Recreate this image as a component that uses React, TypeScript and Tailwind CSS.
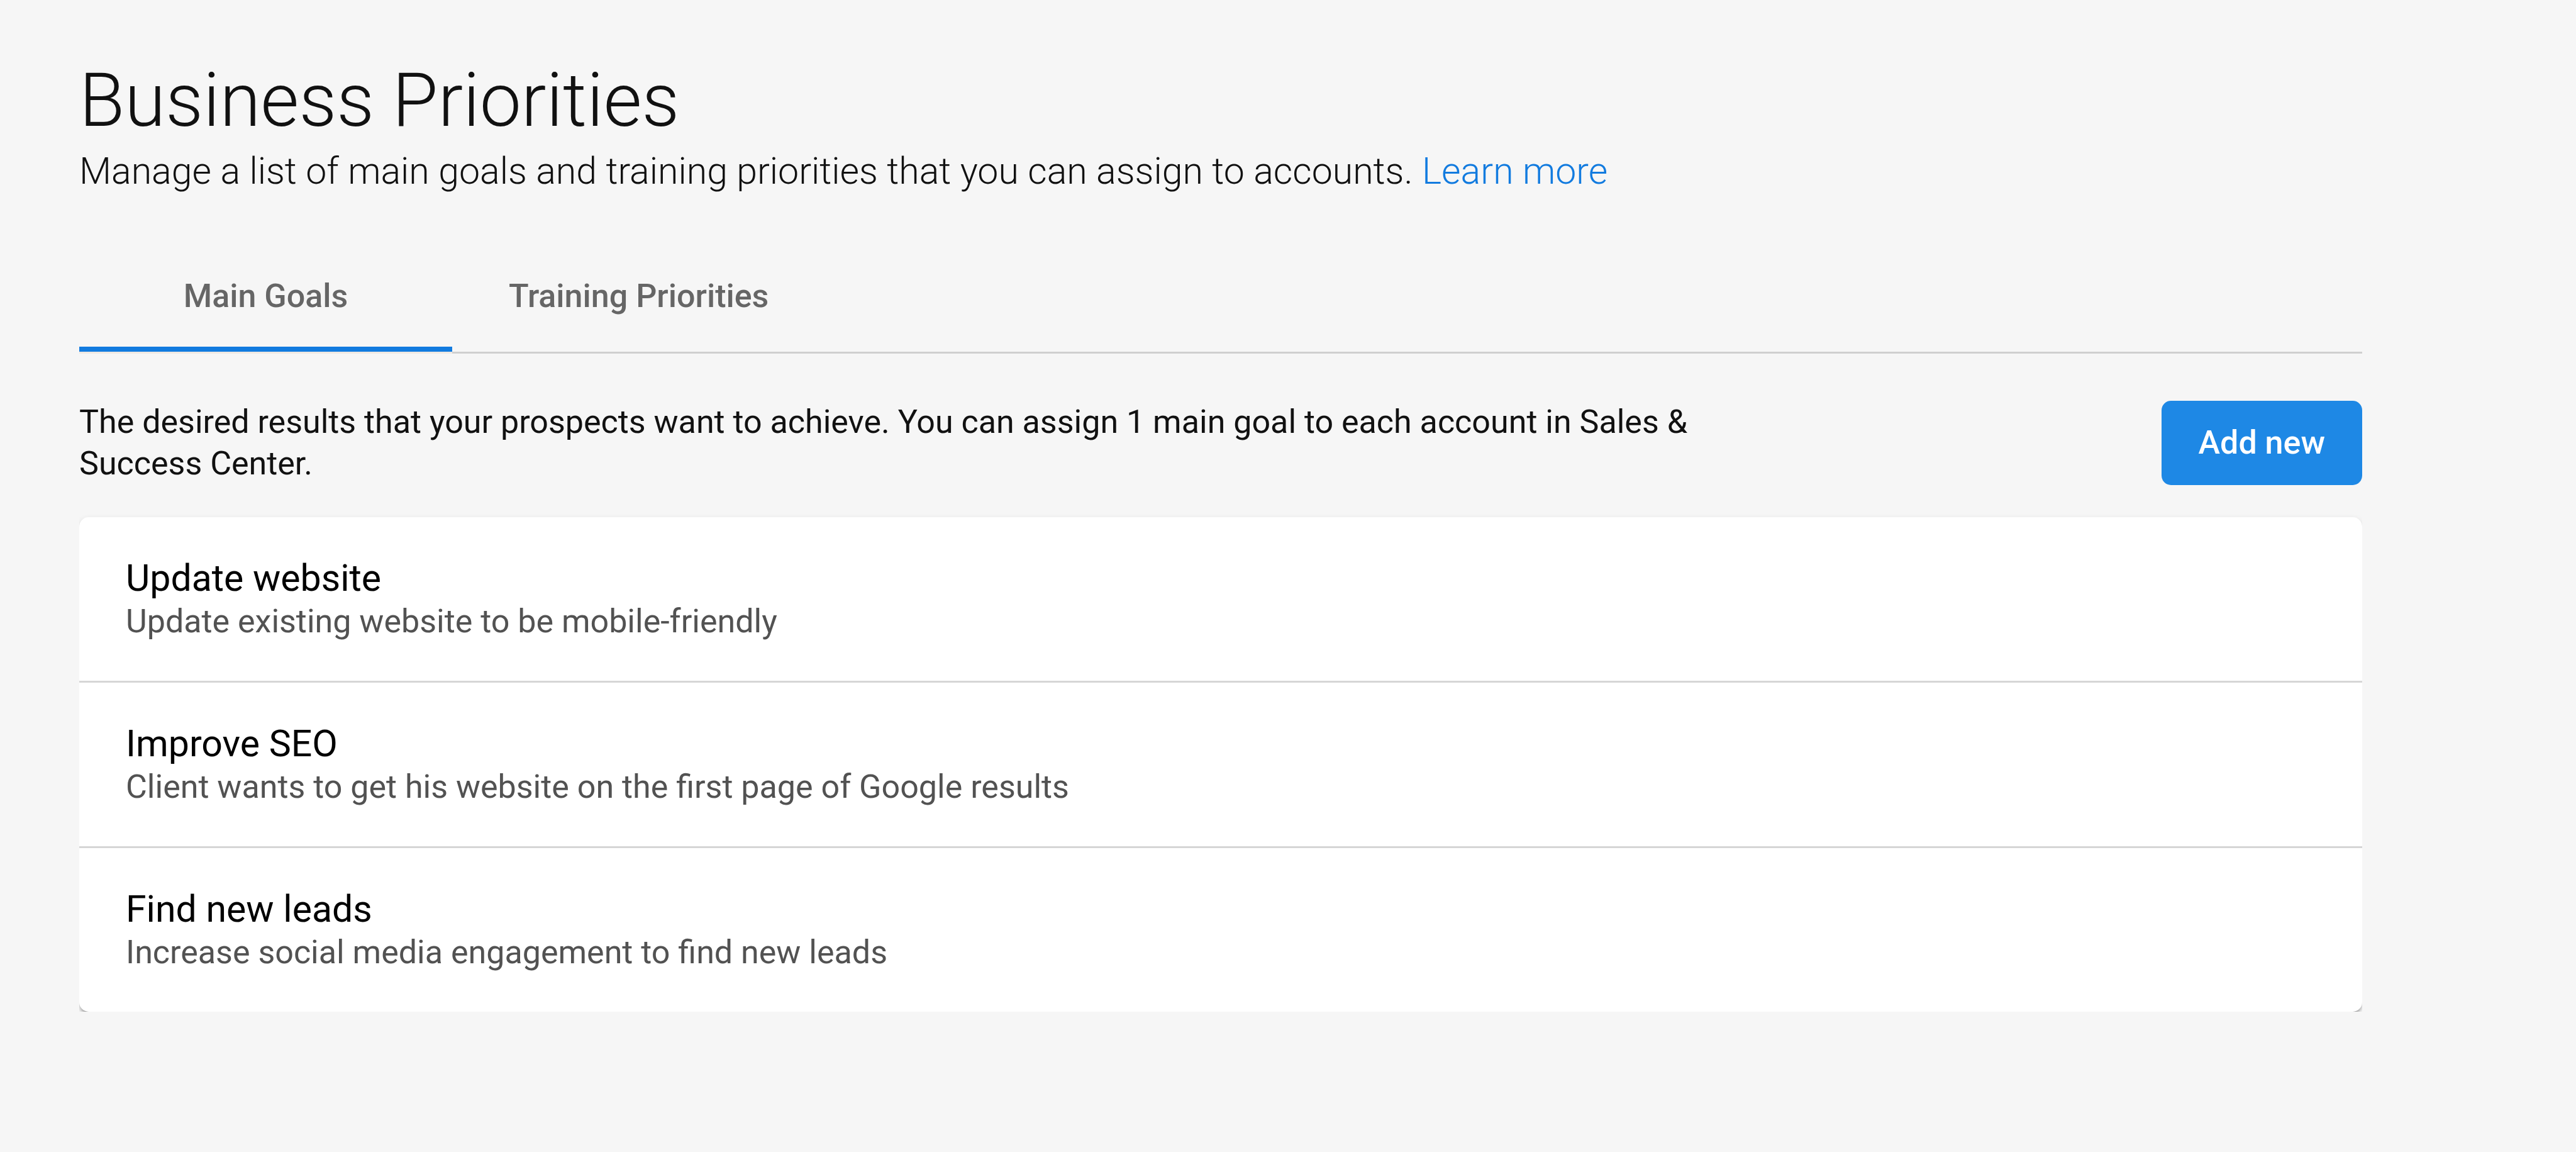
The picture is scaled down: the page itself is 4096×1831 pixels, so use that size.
const goals = [
  { title: 'Update website', detail: 'Update existing website to be mobile-friendly' },
  { title: 'Improve SEO', detail: 'Client wants to get his website on the first page of Google results' },
  { title: 'Find new leads', detail: 'Increase social media engagement to find new leads' },
];

export default function App() {
  return (
    <main className="min-h-screen bg-[#f6f6f6] pt-[86px] pr-[340px] pb-[86px] pl-[126px] font-['Roboto',sans-serif] text-[#111111]">
      <header>
        <h1 className="text-[118px] leading-[148px] font-light">Business Priorities</h1>
        <p className="text-[59px] leading-[76px] font-light">
          Manage a list of main goals and training priorities that you can assign to accounts.{' '}
          <a href="#learn-more" className="text-[#127bdf]">Learn more</a>
        </p>
      </header>

      <div role="tablist" className="mt-[81px] flex h-[171px] border-b-3 border-[#cfcfcf] text-[52px] font-medium text-[#666666]">
        <button type="button" role="tab" aria-selected="true" className="w-[593px] border-b-8 border-[#127bdf] shadow-[0_3px_0_#f0e9e2]">Main Goals</button>
        <button type="button" role="tab" aria-selected="false" className="border-b-8 border-transparent px-[90px]">Training Priorities</button>
      </div>

      <div className="mt-[75px] flex items-center justify-between">
        <p className="max-w-[2620px] text-[52px] leading-[66px]">
          The desired results that your prospects want to achieve. You can assign 1 main goal to each account in Sales &amp; Success Center.
        </p>
        <button type="button" className="h-[134px] rounded-[15px] bg-[#1e88e5] px-[59px] text-[52px] font-medium text-white">Add new</button>
      </div>

      <div className="mt-[47px] overflow-hidden pt-1">
        <ul className="divide-y-3 divide-[#d6d6d6] rounded-[15px] bg-white shadow-[0_7px_4px_-4px_rgba(0,0,0,0.2),0_4px_4px_rgba(0,0,0,0.14),0_4px_11px_rgba(0,0,0,0.12)]">
          {goals.map((goal) => (
            <li key={goal.title} className="px-[74px] pt-[62px] pb-[60px]">
              <h2 className="text-[59px] leading-[70px] text-black">{goal.title}</h2>
              <p className="text-[52px] leading-[68px] text-[#525252]">{goal.detail}</p>
            </li>
          ))}
        </ul>
      </div>
    </main>
  );
}
